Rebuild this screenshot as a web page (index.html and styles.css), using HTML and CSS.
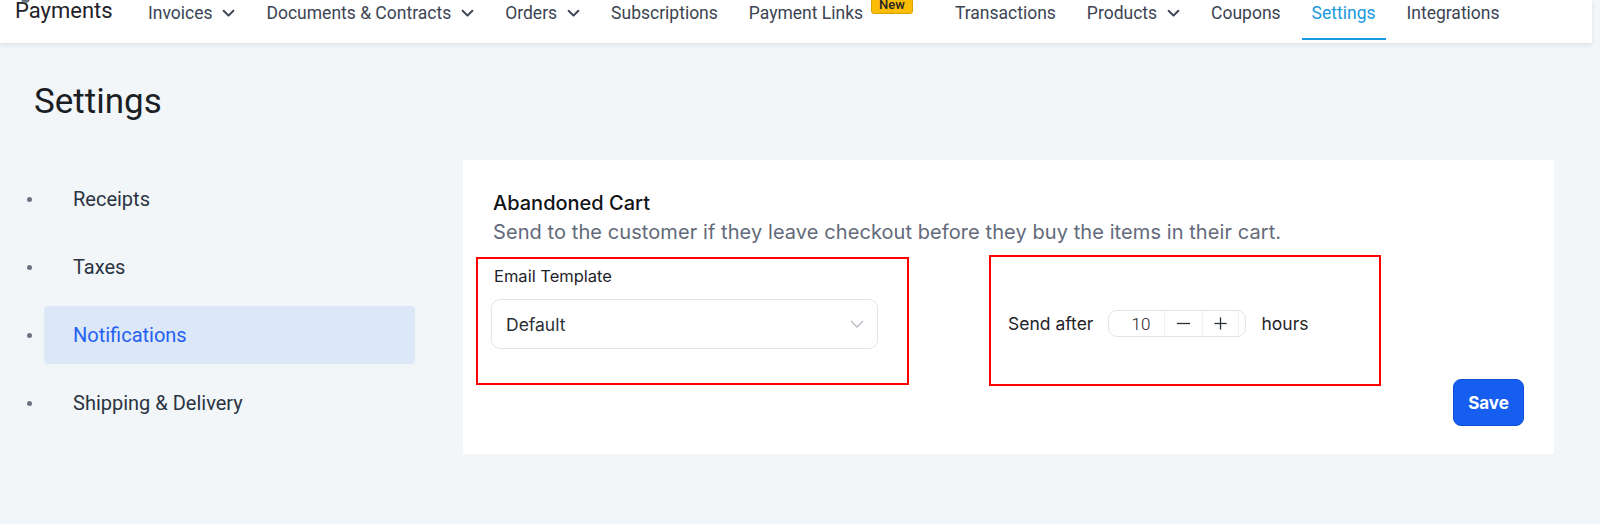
FILE: index.html
```html
<!DOCTYPE html>
<html lang="en">
<head>
<meta charset="utf-8">
<title>Payments - Settings</title>
<link rel="stylesheet" href="styles.css">
</head>
<body>
<header class="topnav">
  <div class="brand"><span class="brand-logo"></span>Payments</div>
  <nav class="nav-items">
    <a class="nav-item">Invoices <svg class="chev" viewBox="0 0 12 8"><polyline points="1.5,1.5 6,6 10.5,1.5"/></svg></a>
    <a class="nav-item">Documents &amp; Contracts <svg class="chev" viewBox="0 0 12 8"><polyline points="1.5,1.5 6,6 10.5,1.5"/></svg></a>
    <a class="nav-item">Orders <svg class="chev" viewBox="0 0 12 8"><polyline points="1.5,1.5 6,6 10.5,1.5"/></svg></a>
    <a class="nav-item">Subscriptions</a>
    <a class="nav-item">Payment Links <span class="badge">New</span></a>
    <a class="nav-item">Transactions</a>
    <a class="nav-item">Products <svg class="chev" viewBox="0 0 12 8"><polyline points="1.5,1.5 6,6 10.5,1.5"/></svg></a>
    <a class="nav-item">Coupons</a>
    <a class="nav-item active">Settings</a>
    <a class="nav-item">Integrations</a>
  </nav>
</header>

<main class="page">
  <h1 class="page-title">Settings</h1>
  <div class="layout">
    <ul class="sidebar">
      <li class="side-item"><a class="side-link">Receipts</a></li>
      <li class="side-item"><a class="side-link">Taxes</a></li>
      <li class="side-item"><a class="side-link active">Notifications</a></li>
      <li class="side-item"><a class="side-link">Shipping &amp; Delivery</a></li>
    </ul>

    <section class="card">
      <h2 class="card-title">Abandoned Cart</h2>
      <p class="card-desc">Send to the customer if they leave checkout before they buy the items in their cart.</p>
      <div class="form-row">
        <div class="mark mark-template">
          <label class="field-label">Email Template</label>
          <div class="select">
            <span class="select-value">Default</span>
            <svg class="select-chev" viewBox="0 0 14 8"><polyline points="1,1 7,7 13,1"/></svg>
          </div>
        </div>
        <div class="mark mark-delay">
          <span class="delay-text">Send after</span>
          <div class="stepper">
            <span class="step-value">10</span>
            <span class="step-btn step-minus"><svg viewBox="0 0 16 16"><line x1="1" y1="8" x2="15" y2="8"/></svg></span>
            <span class="step-btn step-plus"><svg viewBox="0 0 16 16"><line x1="1.5" y1="8" x2="14.5" y2="8"/><line x1="8" y1="1.5" x2="8" y2="14.5"/></svg></span>
            <span class="step-end"></span>
          </div>
          <span class="delay-text hours">hours</span>
        </div>
      </div>
      <div class="card-footer">
        <button class="btn-save">Save</button>
      </div>
    </section>
  </div>
</main>
</body>
</html>
```

FILE: styles.css
```css
html, body {
  margin: 0;
  padding: 0;
}
body {
  background: #f2f6f9;
  font-family: Roboto, "Liberation Sans", sans-serif;
  color: #1f2937;
  height: 524px;
  overflow: hidden;
}

/* ---------- top nav ---------- */
.topnav {
  width: 1592px;
  height: 43px;
  background: #ffffff;
  box-shadow: 0 2px 4px rgba(30, 41, 59, 0.10);
  display: flex;
  align-items: flex-start;
  box-sizing: border-box;
}
.brand {
  position: relative;
  padding-left: 15px;
  width: 123px;
  flex: none;
  font-size: 22px;
  line-height: 22px;
  color: #1f2329;
}
.brand-logo {
  position: absolute;
  left: 21px;
  top: -6px;
  width: 9px;
  height: 9px;
  border-radius: 50%;
  background: #6b7280;
}
.nav-items {
  display: flex;
  align-items: flex-start;
  gap: 11px;
}
.nav-item {
  display: flex;
  align-items: flex-start;
  height: 40px;
  box-sizing: border-box;
  padding: 0 10px;
  font-size: 17.5px;
  line-height: 27px;
  color: #3c4453;
  white-space: nowrap;
}
.nav-item.active {
  color: #1a9ae0;
  border-bottom: 2px solid #1a9ae0;
}
.chev {
  width: 13px;
  height: 9px;
  margin-left: 10px;
  margin-top: 9px;
  fill: none;
  stroke: #3c4453;
  stroke-width: 1.8;
  stroke-linecap: round;
  stroke-linejoin: round;
}
.badge {
  margin-left: 8px;
  margin-right: 11px;
  margin-top: -4px;
  padding: 0 7px;
  height: 16px;
  line-height: 16px;
  font-size: 13px;
  font-weight: 500;
  color: #1f2329;
  background: #fbbc05;
  border: 1px solid #dba200;
  border-radius: 3px;
}

/* ---------- page ---------- */
.page {
  padding-top: 38px;
}
.page-title {
  margin: 0;
  padding-left: 34px;
  font-size: 35px;
  line-height: 42px;
  font-weight: 400;
  color: #1b1f24;
}
.layout {
  display: flex;
  align-items: flex-start;
  margin-top: 37px;
}

/* ---------- sidebar ---------- */
.sidebar {
  list-style: none;
  margin: 0;
  padding: 10px 0 0 0;
  width: 463px;
  flex: none;
}
.side-item {
  display: flex;
  align-items: center;
  height: 58px;
  margin-bottom: 10px;
  padding-left: 27px;
}
.side-item::before {
  content: "";
  width: 5px;
  height: 5px;
  border-radius: 50%;
  background: #6b7280;
  margin-right: 12px;
  flex: none;
}
.side-link {
  display: flex;
  align-items: center;
  width: 371px;
  height: 58px;
  box-sizing: border-box;
  padding-left: 29px;
  border-radius: 4px;
  font-size: 20px;
  color: #2a3342;
}
.side-link.active {
  background: #dce8f8;
  color: #2461f2;
}

/* ---------- card ---------- */
.card {
  width: 1091px;
  background: #ffffff;
  box-sizing: border-box;
  padding: 29px 30px 28px 30px;
  font-family: Inter, "Liberation Sans", sans-serif;
}
.card-title {
  margin: 0;
  font-size: 20px;
  line-height: 28px;
  font-weight: 500;
  color: #101418;
}
.card-desc {
  margin: 0;
  font-size: 20px;
  line-height: 30px;
  letter-spacing: 0.08px;
  color: #626a7a;
}
.form-row {
  display: flex;
  align-items: flex-start;
  margin-top: 8px;
  margin-left: -17px;
}
.mark {
  border: 2px solid #ff0000;
  box-sizing: border-box;
}
.mark-template {
  width: 433px;
  height: 128px;
  margin-top: 2px;
  padding: 6px 0 0 13px;
}
.field-label {
  display: block;
  margin-left: 3px;
  font-size: 16.5px;
  line-height: 22px;
  color: #1f2329;
}
.select {
  margin-top: 12px;
  width: 387px;
  height: 50px;
  box-sizing: border-box;
  border: 1px solid #e1e4e8;
  border-radius: 9px;
  display: flex;
  align-items: center;
  justify-content: space-between;
  padding: 0 13px 0 14px;
}
.select-value {
  font-size: 17.5px;
  color: #2b2f36;
}
.select-chev {
  width: 14px;
  height: 8px;
  fill: none;
  stroke: #b6bac1;
  stroke-width: 1.3;
}
.mark-delay {
  width: 392px;
  height: 131px;
  margin-left: 80px;
  display: flex;
  align-items: center;
  padding: 6px 0 0 17px;
}
.delay-text {
  font-size: 17.5px;
  color: #1f2329;
}
.hours {
  margin-left: 15px;
}
.stepper {
  margin-left: 15px;
  width: 138px;
  height: 27px;
  box-sizing: border-box;
  border: 1px solid #e1e3e6;
  border-radius: 9px;
  display: flex;
  align-items: stretch;
}
.step-value {
  width: 56px;
  flex: none;
  display: flex;
  align-items: center;
  justify-content: center;
  padding-left: 8px;
  box-sizing: border-box;
  font-family: Roboto, "Liberation Sans", sans-serif;
  font-size: 17px;
  font-weight: 300;
  color: #1f2329;
  border-right: 1px solid #f0f0f2;
}
.step-btn {
  width: 38px;
  flex: none;
  display: flex;
  align-items: center;
  justify-content: center;
  border-right: 1px solid #f0f0f2;
  box-sizing: border-box;
}
.step-btn svg {
  width: 15px;
  height: 15px;
  stroke: #2b2f36;
  stroke-width: 1.4;
}
.step-plus {
  width: 36px;
}
.step-end {
  flex: 1;
}
.card-footer {
  display: flex;
  justify-content: flex-end;
  margin-top: -7px;
}
.btn-save {
  width: 71px;
  height: 47px;
  background: #155ef0;
  border: 1px solid #0d4fd6;
  border-radius: 8px;
  color: #ffffff;
  font-family: Inter, "Liberation Sans", sans-serif;
  font-size: 17px;
  font-weight: 700;
  cursor: pointer;
}
```
